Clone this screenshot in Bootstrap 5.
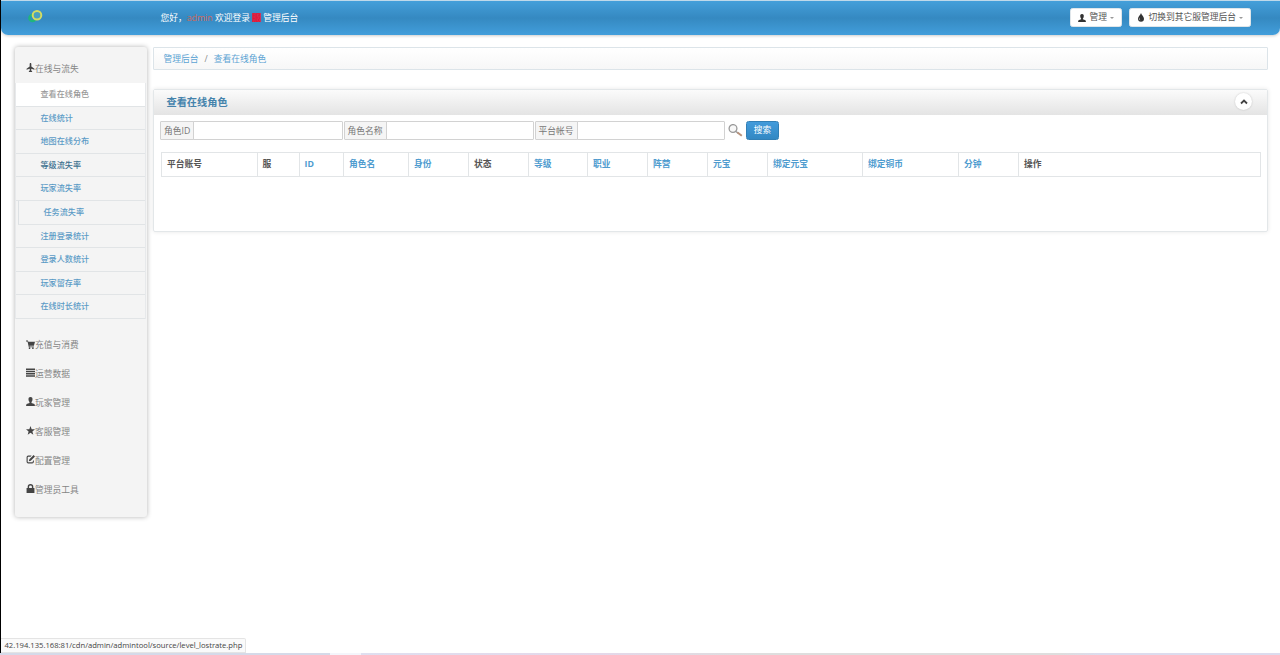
<!DOCTYPE html>
<html lang="zh-CN">
<head>
<meta charset="utf-8">
<title>管理后台</title>
<link href="https://cdn.jsdelivr.net/npm/bootstrap@5.3.0/dist/css/bootstrap.min.css" rel="stylesheet">
<style>
body{font:8.75px/14px "Open Sans","Noto Sans CJK SC",sans-serif;color:#555;background:#fff;height:655px;overflow:hidden;border-left:1px solid #000}
a{text-decoration:none;color:#5ba3d3}
.topbar{height:35px;border-top:1px solid #bfd9ea;border-radius:0 0 7px 7px;background:linear-gradient(#449fda,#3589c1 50%,#429edb);box-shadow:0 1px 3px #0003;color:#fff;padding:0 29px 1px 27px}
.logo{width:132.5px;height:16px;margin-top:-3px}
.greet b{font-weight:400;color:#d2695c}
.greet i{font-style:normal;background:linear-gradient(#c92f50,#c92f50) center/100% 9px no-repeat;color:#f01030}
.btn-top{height:19px;padding:0 7px;font-size:8.75px;line-height:17px;border:1px solid #e0e6ea;border-radius:2.5px;background:#fff;color:#555;display:flex;align-items:center}
.btn-top:hover{background:#fff}
.btn-top::after{border-top-color:#999;border-width:2.2px;border-bottom:0;margin-left:3px!important;vertical-align:0}
.btn-switch{margin-left:6.5px}
.shell{padding:12px 12px 0 14px}
.sidebar{width:132px;height:470px;background:#f4f4f4;border-radius:3px;box-shadow:0 0 5px #0000004d;padding-top:13px}
.group{height:28.85px;padding-left:11px;color:#858585;white-space:nowrap}
.group svg{width:9px;height:9px;fill:#444;margin-top:-4px}
.group-open{height:23px;padding-top:2px}
.submenu{margin:0 1px 11.5px 0;border-left:1px solid #e7e9eb;border-right:1px solid #e7e9eb}
.submenu a{display:block;height:23.6px;line-height:22.4px;border-bottom:1px solid #e1e4e6;padding-left:24.500px;font-size:8.1px;font-weight:500;color:#5b9bc6;white-space:nowrap}
.submenu a.active{background:#fff;color:#999}
.submenu a.hovered{color:#3f7290}
.submenu a.deep{margin-left:2px;border-left:1px solid #dde1e4}
.main-area{margin-left:6px}
.crumbs{height:23px;border:1px solid #dce4e9;background:linear-gradient(#fff,#f7f7f7);padding:0 9.500px;border-radius:1px}
.crumbs .breadcrumb-item+.breadcrumb-item{padding-left:6px}
.crumbs .breadcrumb-item+.breadcrumb-item::before{padding-right:6px;color:#888}
.panel{margin-top:19px;height:143px;border:1px solid #e3e7e9;border-radius:2px;box-shadow:0 0 4px #0000001a}
.panel-top{height:25px;background:linear-gradient(#fbfbfb,#e4e4e4);padding:0 15px 2px 12.5px;font-size:10.2px;font-weight:700;color:#4583ac}
.fold{width:17px;height:17px;border-radius:50%;background:#fff;box-shadow:0 0 2px #0003}
.fields{padding:6px 6px 0}
.field-set{height:19px;width:182.5px;margin-right:1px;flex-wrap:nowrap}
.field-set .input-group-text{font-size:8.75px;line-height:14px;padding:0 3px;background:#f5f5f5;border:1px solid #d2d2d2;border-radius:1px;color:#777}
.field-set .form-control{padding:0;min-height:0;border:1px solid #d2d2d2;border-radius:1px}
.field-set.wide{width:190px}
.lens{margin-left:2px}
.btn-find{height:19px;padding:0;width:33px;font-size:8.75px;line-height:17px;border-radius:2.5px;background:linear-gradient(#429bdb,#3388c3);border:1px solid #327fb5;color:#fff;margin-left:3.5px}
.grid-head{width:1099.5px;table-layout:fixed;margin:12px 0 0 7px;border-collapse:collapse}
.grid-head th{height:24px;border:1px solid #e2e5e7;padding:0 5px 1px;line-height:14px;font-weight:700;white-space:nowrap;color:#555}
.grid-head th a{color:#4f9ccf}
.status{position:absolute;left:1px;bottom:2px;width:245px;height:15px;background:#fafafa;border:1px solid #e4e4e4;border-left:0;border-radius:0 2px 0 0;font:7.65px/13.500px "Open Sans",sans-serif;color:#444;padding-left:3.500px;white-space:nowrap}
.bottom-line{position:absolute;left:0;bottom:0;width:100%;height:2px;background:linear-gradient(90deg,#d5dae9 0 330px,#f4f5fb 330px 361px,#dfdff0 361px,#e4d8ea 600px,#dedede 760px 1060px,#dcdcee 1100px)}
</style>
</head>
<body>
<svg class="d-none">
<symbol id="user" viewBox="0 0 16 16"><path d="M8 0C5 0 4 2 4.500 5c.2 2 .8 3 1.700 4v1.500L1 12.500 0 16h16l-1-3.500-5.200-2V9c.9-1 1.500-2 1.700-4C12 2 11 0 8 0Z"/></symbol>
</svg>
<header class="topbar d-flex align-items-center">
<div class="logo d-flex"><svg width="18" height="16" viewBox="0 0 18 16" fill="none"><circle cx="4.500" cy="10" r="3.200" stroke="#1fb57c" stroke-width="2.200"/><circle cx="9" cy="7.300" r="4.300" fill="#4a9fc0" stroke="#d3dc62" stroke-width="2"/></svg></div>
<div class="greet">您好，<b>admin</b> 欢迎登录 <i>服</i> 管理后台</div>
<div class="ms-auto d-flex">
<button class="btn btn-top dropdown-toggle"><svg class="me-1" width="8" height="8" fill="#333"><use href="#user"/></svg>管理</button>
<button class="btn btn-top btn-switch dropdown-toggle"><svg class="me-1" width="8" height="9" viewBox="0 0 16 18" fill="#333"><path fill-rule="evenodd" d="M8 0c1 4 6 7 6 11.500a6 6 0 0 1-12 0C2 7 7 4 8 0ZM5.500 9c-1.800 3-.8 5 1.500 5.500C5.500 13 5.300 11 5.500 9Z"/></svg>切换到其它服管理后台</button>
</div>
</header>
<div class="shell d-flex">
<nav class="sidebar flex-shrink-0">
<div class="group group-open"><svg viewBox="0 0 16 16"><path d="M8 0c1 0 1.500 1 1.500 2v4L15 10v2l-5.500-2-.3 3L11 15v1H5v-1l1.800-2-.3-3L1 12v-2l5.500-4V2C6.500 1 7 0 8 0Z"/></svg>在线与流失</div>
<div class="submenu">
<a class="active" href="#">查看在线角色</a>
<a href="#">在线统计</a>
<a href="#">地图在线分布</a>
<a class="hovered" href="#">等级流失率</a>
<a href="#">玩家流失率</a>
<a class="deep" href="#">任务流失率</a>
<a href="#">注册登录统计</a>
<a href="#">登录人数统计</a>
<a href="#">玩家留存率</a>
<a href="#">在线时长统计</a>
</div>
<div class="pt-2">
<div class="group"><svg viewBox="0 0 16 16"><path d="M0 1h3.500L4 3h12l-2 7H6l.3 1.500H14V13H5L2.700 2.500H0ZM5 13.500h2.500V16H5Zm6 0h2.500V16H11Z"/></svg>充值与消费</div>
<div class="group"><svg viewBox="0 0 16 16"><path d="M0 1h16v2.500H0Zm0 4h16v2.500H0Zm0 4h16v2.500H0Zm0 4h16v2.500H0Z"/></svg>运营数据</div>
<div class="group"><svg><use href="#user"/></svg>玩家管理</div>
<div class="group"><svg viewBox="0 0 16 16"><path d="m8 0 2.100 5.600 5.900.3-4.600 3.700L13 15.500l-5-3.300-5 3.300 1.600-5.900L0 5.900l5.900-.3Z"/></svg>客服管理</div>
<div class="group"><svg viewBox="0 0 16 16"><path d="M10 1H4a3 3 0 0 0-3 3v8a3 3 0 0 0 3 3h7a3 3 0 0 0 3-3V9l-2 2v1a1 1 0 0 1-1 1H4a1 1 0 0 1-1-1V4a1 1 0 0 1 1-1h4Zm3.500-1L16 2.500 8.500 10 5 11l1-3.500Z"/></svg>配置管理</div>
<div class="group"><svg viewBox="0 0 16 16"><path fill-rule="evenodd" d="M1 7h2V5a5 5 0 0 1 10 0v2h2v9H1Zm4.500 0h5V5a2.500 2.500 0 0 0-5 0Z"/></svg>管理员工具</div>
</div>
</nav>
<main class="main-area flex-grow-1">
<nav class="crumbs d-flex align-items-center"><ol class="breadcrumb m-0"><li class="breadcrumb-item"><a href="#">管理后台</a></li><li class="breadcrumb-item"><a href="#">查看在线角色</a></li></ol></nav>
<section class="panel">
<div class="panel-top d-flex align-items-center justify-content-between">查看在线角色<span class="fold d-flex align-items-center justify-content-center"><svg width="8" height="8" viewBox="0 0 8 8" fill="none" stroke="#444" stroke-width="1.800"><path d="M1 5.500 4 2.500l3 3"/></svg></span></div>
<form class="fields d-flex align-items-center">
<div class="input-group field-set"><span class="input-group-text">角色ID</span><input class="form-control"></div>
<div class="input-group field-set wide"><span class="input-group-text">角色名称</span><input class="form-control"></div>
<div class="input-group field-set wide"><span class="input-group-text">平台帐号</span><input class="form-control"></div>
<svg class="lens flex-shrink-0" width="15" height="13" viewBox="0 0 15 13" fill="none" stroke="#999"><circle cx="5" cy="4.500" r="3.900" fill="#f8f8f8" stroke-width="1.300"/><path d="m8 7.500 2 1.600" stroke-width="1.500"/><path d="m9.500 8.500 4.300 3.300" stroke="#b9937c" stroke-width="2"/></svg>
<button type="button" class="btn btn-find">搜索</button>
</form>
<table class="grid-head">
<colgroup><col style="width:95.5px"><col style="width:42px"><col style="width:44.5px"><col style="width:65px"><col style="width:60px"><col style="width:60px"><col style="width:59px"><col style="width:60px"><col style="width:60px"><col style="width:60px"><col style="width:95px"><col style="width:96px"><col style="width:60px"><col></colgroup>
<tr><th>平台账号</th><th>服</th><th><a href="#">ID</a></th><th><a href="#">角色名</a></th><th><a href="#">身份</a></th><th>状态</th><th><a href="#">等级</a></th><th><a href="#">职业</a></th><th><a href="#">阵营</a></th><th><a href="#">元宝</a></th><th><a href="#">绑定元宝</a></th><th><a href="#">绑定铜币</a></th><th><a href="#">分钟</a></th><th>操作</th></tr>
</table>
</section>
</main>
</div>
<div class="status">42.194.135.168:81/cdn/admin/admintool/source/level_lostrate.php</div>
<div class="bottom-line"></div>
<script src="https://cdn.jsdelivr.net/npm/bootstrap@5.3.0/dist/js/bootstrap.bundle.min.js"></script>
</body>
</html>
